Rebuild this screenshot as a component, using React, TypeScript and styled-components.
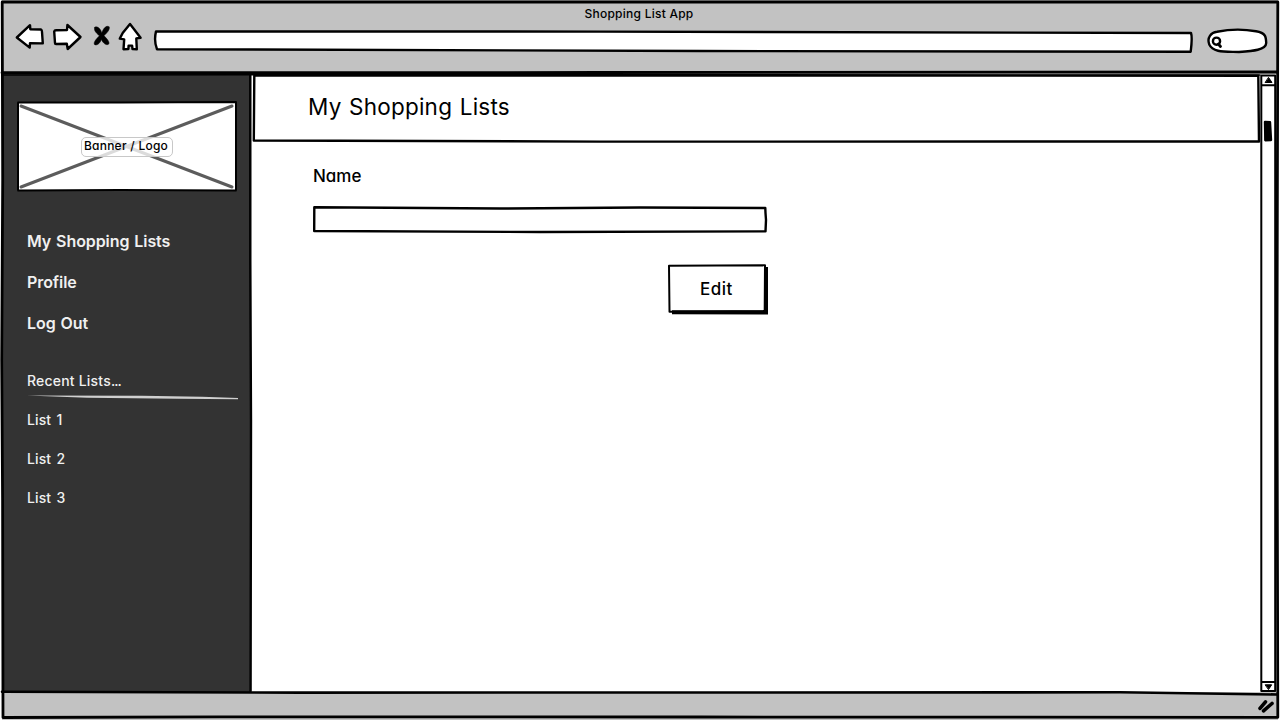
import React from "react";
import styled, { createGlobalStyle } from "styled-components";

const GlobalStyle = createGlobalStyle`
  * { box-sizing: border-box; }
  html, body { margin: 0; padding: 0; background: #fff; overflow: hidden; }
  body { font-family: Inter, Lato, "Liberation Sans", sans-serif; font-feature-settings: "cv11" 1; color: #000; }
  p, h1, h2, ul { margin: 0; padding: 0; font-weight: inherit; }
`;

const Window = styled.div`
  position: relative;
  display: flex;
  flex-direction: column;
  width: 1280px;
  height: 720px;
  background: #fff;
`;

/* Hand-drawn outlines lie over the element they decorate. */
const Ink = styled.svg`
  position: absolute;
  inset: 0;
  width: 100%;
  height: 100%;
  overflow: visible;
  pointer-events: none;
  fill: none;
  stroke: #000;
  stroke-width: 2.4;
  stroke-linejoin: round;
  stroke-linecap: round;
`;

const Toolbar = styled.header`
  display: flex;
  flex-direction: column;
  flex: none;
  height: 74px;
  margin: 0 2px;
  background: #c2c2c2;
`;

const WindowTitle = styled.h1`
  padding: 5px 2px 0 0;
  text-align: center;
  font-size: 12px;
  line-height: 18px;
  font-weight: 450;
  letter-spacing: 0.25px;
`;

const Controls = styled.div`
  display: flex;
  align-items: flex-start;
  height: 34px;
  padding-left: 12px;
`;

const Glyph = styled.svg<{ $gap: number }>`
  flex: none;
  margin-right: ${(p) => p.$gap}px;
  overflow: visible;
  fill: #fff;
  stroke: #000;
  stroke-width: 2.4;
  stroke-linejoin: round;
  stroke-linecap: round;
`;

const Body = styled.div`
  display: flex;
  flex: none;
  height: 618px;
  padding: 0 4px 0 2px;
`;

const Sidebar = styled.aside`
  display: flex;
  flex-direction: column;
  flex: none;
  width: 249px;
  padding: 28px 13px 0 15px;
  background: #333;
  color: #f0f0f0;
`;

const Banner = styled.div`
  position: relative;
  display: flex;
  align-items: center;
  justify-content: center;
  flex: none;
  width: 220px;
  height: 89px;
  background: #fff;
`;

const BannerLabel = styled.span`
  position: relative;
  width: 92px;
  height: 20px;
  margin-top: 1px;
  padding-right: 2px;
  border: 1px solid #c8c8c8;
  border-radius: 5px;
  background: rgba(255, 255, 255, 0.78);
  color: #000;
  font-size: 12px;
  font-weight: 450;
  line-height: 16px;
  letter-spacing: 0.25px;
  text-align: center;
  white-space: nowrap;
`;

const NavList = styled.ul<{ $small?: boolean }>`
  display: flex;
  flex-direction: column;
  list-style: none;
  padding-left: 10px;
  margin-top: ${(p) => (p.$small ? 0 : 30)}px;
  font-size: ${(p) => (p.$small ? 14 : 16)}px;
  line-height: ${(p) => (p.$small ? 39 : 41)}px;
  font-weight: ${(p) => (p.$small ? 550 : 570)};
  letter-spacing: ${(p) => (p.$small ? 0.1 : -0.08)}px;
  word-spacing: ${(p) => (p.$small ? 1.5 : 1)}px;
`;

const RecentHeading = styled.h2`
  margin-top: 26px;
  padding-left: 10px;
  font-size: 14px;
  font-weight: 550;
  line-height: 22px;
  letter-spacing: 0.2px;
`;

const Ellipsis = styled.span`
  letter-spacing: -1px;
`;

const Divider = styled.svg`
  flex: none;
  margin: 3px 0 0 10px;
`;

const Content = styled.main`
  display: flex;
  flex-direction: column;
  flex: 1;
  padding: 0 2px;
`;

const PageHeader = styled.div`
  position: relative;
  display: flex;
  align-items: center;
  height: 68px;
  padding: 0 0 3px 55px;
  font-size: 22.5px;
  letter-spacing: 0.22px;
  word-spacing: 1px;
`;

const Form = styled.form`
  display: flex;
  flex-direction: column;
  align-items: flex-end;
  width: 514px;
  padding: 23px 0 0 60px;
`;

const Label = styled.label`
  align-self: flex-start;
  font-size: 17px;
  font-weight: 450;
  line-height: 22px;
`;

const Field = styled.div<{ $w: number; $h: number; $top: number }>`
  position: relative;
  display: flex;
  align-items: center;
  justify-content: center;
  width: ${(p) => p.$w}px;
  height: ${(p) => p.$h}px;
  margin-top: ${(p) => p.$top}px;
  padding-right: 2px;
  background: #fff;
  font-size: 17px;
  font-weight: 450;
  letter-spacing: 0.5px;
`;

const Scrollbar = styled.div`
  position: relative;
  flex: none;
  width: 15px;
  background: #fff;
`;

const Footer = styled.footer`
  display: flex;
  align-items: center;
  justify-content: flex-end;
  flex: none;
  height: 28px;
  margin: 0 2px;
  padding-right: 3px;
  background: #c2c2c2;
`;

export default function App() {
  return (
    <>
      <GlobalStyle />
      <Window>
        <Toolbar>
          <WindowTitle>Shopping List App</WindowTitle>
          <Controls>
            <Glyph $gap={9} width="29" height="28" viewBox="14 23 29 28">
              <path d="M16.8 37.5 30 25.2 30.3 29.2 41 29.5Q42 30 42 32L42.8 43.4 30 43.2 29.7 47.6 Z" />
            </Glyph>
            <Glyph $gap={11} width="30" height="28" viewBox="52 23 30 28">
              <path d="M54.2 31.5Q54.5 30.2 56 30.2L67 30 67.4 25 80.5 37 67.7 49 66.8 43.7 56 44Q55 44 55 43Z" />
            </Glyph>
            <Glyph $gap={8} width="17" height="28" viewBox="93 23 17 28">
              <path
                d="M94.8 27.3C97.5 25.8 100.4 28.3 101.8 33 103.4 28 106.5 25 109.2 26.8 110.2 29.5 107 32.8 104 35.8 107 38.8 109.8 41.8 108.8 44 106.4 46 102.8 43 101.4 39.5 99.8 43.6 96.8 46 94.4 44.4 93.4 42 96.4 38.9 99.4 35.8 96 33 93.4 30 94.8 27.3Z"
                fill="#000"
                strokeWidth="0.5"
              />
            </Glyph>
            <Glyph $gap={8} width="26" height="28" viewBox="118 23 26 28">
              <path d="M130 24 140.6 37.7 136.3 38.4 136.8 49.2 132.5 49 132.1 45.6 128.6 45.6 128.4 49 123.5 49.3 124.2 39.4 119.8 38.6 122.7 33 Z" />
            </Glyph>
            <Glyph $gap={12} width="1042" height="28" viewBox="152 23 1042 28">
              <path d="M156 31.4 L600 31.6 1191 33 Q1192.5 37 1190.7 51.7 L700 51 157 49.2 Q153.7 41 156 31.4Z" />
            </Glyph>
            <Glyph $gap={0} width="62" height="31" viewBox="1206 23 62 31">
              <path d="M1217 31.7Q1237 27.8 1256 31.3C1266 33 1266 37 1266.2 43 1266 50 1253 51 1239 52 1225 51.5 1213 52.7 1209.3 44.5 1206.7 38 1211 32.3 1217 31.7Z" />
              <circle cx="1216.5" cy="41.2" r="3.6" />
              <path d="M1218.3 44 1220.5 46.5" strokeWidth="2.8" />
            </Glyph>
          </Controls>
        </Toolbar>

        <Body>
          <Sidebar>
            <Banner>
              <Ink viewBox="17 102 220 89">
                <path d="M21 106 232 187M21 187 232 106" stroke="#5c5c5c" strokeWidth="3" />
                <path d="M18 102.5 120 102.4 236 102 236 190.4 120 190 18 190.4Z" strokeWidth="2" />
              </Ink>
              <BannerLabel>Banner / Logo</BannerLabel>
            </Banner>
            <NavList>
              <li>My Shopping Lists</li>
              <li>Profile</li>
              <li>Log Out</li>
            </NavList>
            <RecentHeading>
              Recent Lists<Ellipsis>...</Ellipsis>
            </RecentHeading>
            <Divider width="211" height="5" viewBox="0 0 211 5">
              <path d="M0 0.4 115 0.7 175 1.8 211 3 211 4.2 150 3.7 60 2.8Z" fill="#d0d0d0" />
            </Divider>
            <NavList $small>
              <li>List 1</li>
              <li>List 2</li>
              <li>List 3</li>
            </NavList>
          </Sidebar>
          <Content>
            <PageHeader>
              My Shopping Lists
              <Ink viewBox="253 74 1006 68" preserveAspectRatio="none">
                <path d="M254.3 75.5 1258.3 75.7 1259 141.5 600 141.6 253.8 140.5Z" />
              </Ink>
            </PageHeader>
            <Form>
              <Label>Name</Label>
              <Field $w={454} $h={26} $top={20}>
                <Ink viewBox="313 207 454 26">
                  <path d="M314.3 207.3 500 208.5 640 207.5 765.3 208 765.5 213 766 220 765.5 231.4 540 232 314.2 231Z" />
                </Ink>
              </Field>
              <Field $w={99} $h={48} $top={32}>
                Edit
                <Ink viewBox="668 265 99 48">
                  <path d="M672 312.2 766 312.4 766 267" strokeWidth="4" strokeLinejoin="miter" strokeLinecap="butt" />
                  <path d="M669 265.7 765 265.3 764.7 311 669.5 311.8Z" strokeWidth="2" />
                </Ink>
              </Field>
            </Form>
          </Content>
          <Scrollbar>
            <Ink viewBox="1261 74 15 618">
              <path d="M1261.3 75.5 1275.2 75.5 1275.2 691 1261.3 691Z M1261.5 85.3 1275 85.3M1261.5 682 1275 682" strokeWidth="2" />
              <path d="M1268.7 77.7 1272 82.5 1265.5 82.5Z M1265.5 684.8 1271.7 684.8 1268.7 689.3Z" fill="#000" strokeWidth="1" />
              <path d="M1265 122 1270 122.3 1271 140 1265.3 140.3 1265.2 132Z" fill="#000" strokeWidth="2.4" />
            </Ink>
          </Scrollbar>
        </Body>

        <Footer>
          <svg width="18" height="16" viewBox="1257 699 18 16" stroke="#000" strokeWidth="3.6" strokeLinecap="round">
            <path d="M1260 709.3 1265.5 702.8M1263.5 711.8 1272 704.5" />
          </svg>
        </Footer>

        <Ink viewBox="0 0 1280 720">
          <path d="M2.2 2 1277.8 2 1277 360 1277.8 717.3 700 717 220 716.8 3 717.5 2.6 500 1.7 360 2.7 180Z" strokeWidth="2.8" />
          <path d="M2 72.7 600 72.5 1277 72" strokeWidth="2.8" />
          <path d="M2 75 252 74.7 1260 75" strokeWidth="1.6" />
          <path d="M250.3 75 250.3 260 251 420 250.6 691" strokeWidth="2.4" />
          <path d="M2 691.8 300 692.6 1120 692.3 1277 694.5" strokeWidth="2.6" />
        </Ink>
      </Window>
    </>
  );
}
